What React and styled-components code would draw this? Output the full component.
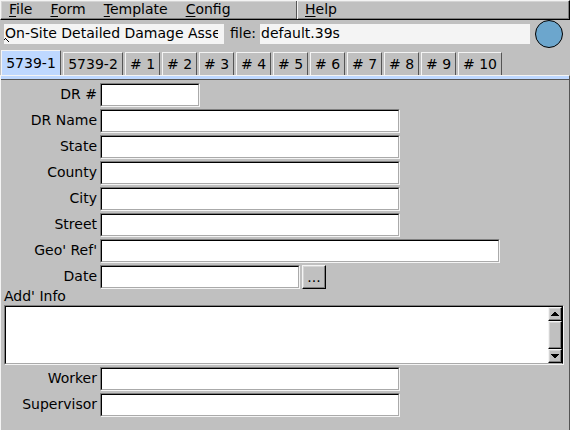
import React from "react";
import styled, { createGlobalStyle } from "styled-components";

const GlobalStyle = createGlobalStyle`
  * { box-sizing: border-box; }
  html, body { margin: 0; background: #c0c0c0; }
  body, button, input, textarea {
    font-family: "DejaVu Sans", sans-serif;
    font-size: 14px;
    color: #000;
  }
  button, input, textarea { margin: 0; padding: 0; border: 0; border-radius: 0; outline: none; }
`;

const Window = styled.div`
  display: flex;
  flex-direction: column;
  min-height: 100vh;
`;

const MenuBar = styled.nav`
  display: flex;
  height: 20px;
  border: 1px solid;
  border-color: #f4f4f4 #000 #000 #f4f4f4;
  box-shadow: inset -1px -1px #808080, inset 1px 1px #d4d4d4;
`;

const MenuGroup = styled.div`
  display: flex;
  gap: 2px;
  width: ${(p) => (p.$main ? "296px" : "auto")};
  border-right: ${(p) => (p.$main ? "1px solid #555" : "0")};
  box-shadow: ${(p) => (p.$main ? "1px 0 #f4f4f4" : "none")};
`;

const MenuItem = styled.button`
  padding: 0 8px;
  height: 16px;
  line-height: 14px;
  background: transparent;
  white-space: nowrap;
  u { text-underline-offset: 2px; text-decoration-thickness: 1px; }
`;

const TitleRow = styled.header`
  display: flex;
  align-items: center;
  height: 30px;
  padding: 0 6px 2px 4px;
`;

const TitleField = styled.div`
  display: flex;
  position: relative;
  width: 220px;
`;

const FlatInput = styled.input`
  width: 100%;
  min-width: 0;
  height: 20px;
  padding: 0 6px 2px 1px;
  background: #f4f4f4;
`;

const Caret = styled.svg`
  position: absolute;
  left: 0;
  bottom: 2px;
`;

const FileField = styled.label`
  display: flex;
  align-items: baseline;
  flex: 1;
  gap: 4px;
  margin: 0 5px 0 6px;
`;

const Tabs = styled.div`
  display: flex;
  align-items: flex-end;
  gap: 2px;
  height: 25px;
  padding-left: 1px;
`;

const Tab = styled.button`
  width: ${(p) => p.$width}px;
  height: ${(p) => (p.$active ? 25 : 23)}px;
  padding-bottom: ${(p) => (p.$active ? 1 : 0)}px;
  border: 1px solid;
  border-width: 1px 1px 0;
  border-color: #f4f4f4 #555 #f4f4f4 #f4f4f4;
  background: ${(p) => (p.$active ? "#bed8ff" : "#c0c0c0")};
  white-space: nowrap;
`;

const Panel = styled.main`
  flex: 1;
  border: 1px solid;
  border-width: 1px 1px 0;
  border-color: #f4f4f4 #555 #f4f4f4 #f4f4f4;
`;

const SelectionBar = styled.div`
  height: 4px;
  background: #bed8ff;
  border-bottom: 1px solid #555;
`;

const Form = styled.form`
  display: flex;
  flex-direction: column;
  gap: 2px;
  padding: 3px 5px 12px 3px;
`;

const Row = styled.div`
  display: grid;
  grid-template-columns: 93px minmax(0, 1fr);
  column-gap: 3px;
  height: 24px;
`;

const Label = styled.label`
  text-align: right;
  line-height: 22px;
  white-space: nowrap;
`;

const Controls = styled.div`
  display: flex;
  gap: 2px;
`;

const Sunken = styled.div`
  display: flex;
  width: ${(p) => p.$width};
  max-width: 100%;
  height: ${(p) => p.$height}px;
  border: 1px solid;
  border-color: #808080 #f4f4f4 #f4f4f4 #808080;
`;

const TextInput = styled.input`
  flex: 1;
  min-width: 0;
  padding: 0 2px;
  background: #fff;
  border: 1px solid;
  border-color: #000 #aaa #aaa #000;
`;

const RaisedButton = styled.button`
  display: flex;
  align-items: center;
  justify-content: center;
  flex: ${(p) => (p.$grow ? "1" : "none")};
  width: ${(p) => p.$size}px;
  height: ${(p) => p.$size}px;
  line-height: 20px;
  background: #c0c0c0;
  border: 1px solid;
  border-color: #f4f4f4 #000 #000 #f4f4f4;
  box-shadow: inset -1px -1px #808080, inset 1px 1px #d4d4d4;
`;

const InfoBlock = styled.div`
  display: flex;
  flex-direction: column;
  margin-top: -2px;
`;

const InfoLabel = styled.label`
  height: 16px;
  line-height: 14px;
`;

const NotesBody = styled.div`
  display: flex;
  flex: 1;
  border: 1px solid;
  border-color: #000 #000 #aaa #000;
`;

const Notes = styled.textarea`
  flex: 1;
  padding: 2px;
  resize: none;
  overflow: hidden;
  background: #fff;
`;

const ScrollBar = styled.div`
  display: flex;
  flex-direction: column;
  width: 14px;
`;

function Arrow({ down }) {
  return (
    <svg width="8" height="4" viewBox="0 0 8 4" shapeRendering="crispEdges" aria-hidden="true">
      <path d={down ? "M0 0h8v1H7v1H6v1H5v1H3V3H2V2H1V1H0z" : "M3 0h2v1h1v1h1v1h1v1H0V3h1V2h1V1h1z"} />
    </svg>
  );
}

function Field({ id, label, width, children }) {
  return (
    <Row>
      <Label htmlFor={id}>{label}</Label>
      <Controls>
        <Sunken $width={`${width}px`} $height={24}>
          <TextInput id={id} type="text" />
        </Sunken>
        {children}
      </Controls>
    </Row>
  );
}

const menus = ["File", "Form", "Template", "Config"];

const tabs = [
  { name: "5739-1", width: 60 },
  { name: "5739-2", width: 60 },
  ...Array.from({ length: 10 }, (_, i) => ({ name: `# ${i + 1}`, width: i === 9 ? 44 : 35 })),
];

const places = [
  { id: "dr-number", label: "DR #", width: 100 },
  { id: "dr-name", label: "DR Name", width: 300 },
  { id: "state", label: "State", width: 300 },
  { id: "county", label: "County", width: 300 },
  { id: "city", label: "City", width: 300 },
  { id: "street", label: "Street", width: 300 },
  { id: "geo-ref", label: "Geo' Ref'", width: 400 },
];

function Menu({ name }) {
  return (
    <MenuItem type="button">
      <u>{name[0]}</u>
      {name.slice(1)}
    </MenuItem>
  );
}

export default function App() {
  const [active, setActive] = React.useState(0);
  return (
    <Window>
      <GlobalStyle />
      <MenuBar>
        <MenuGroup $main>
          {menus.map((name) => (
            <Menu key={name} name={name} />
          ))}
        </MenuGroup>
        <MenuGroup>
          <Menu name="Help" />
        </MenuGroup>
      </MenuBar>
      <TitleRow>
        <TitleField>
          <FlatInput readOnly aria-label="Form title" value="On-Site Detailed Damage Assessment" />
          <Caret width="5" height="5" viewBox="0 0 5 5" shapeRendering="crispEdges" aria-hidden="true">
            <path d="M0 2h1v1H0zM1 1h1v1H1zM2 2h1v1H2zM3 3h1v1H3zM4 4h1v1H4z" />
          </Caret>
        </TitleField>
        <FileField>
          file:
          <FlatInput readOnly value="default.39s" />
        </FileField>
        <svg width="29" height="28" viewBox="0 0 29 28" aria-hidden="true">
          <circle cx="14" cy="14" r="13.5" fill="#6ca6cd" stroke="#000" />
        </svg>
      </TitleRow>
      <Tabs role="tablist">
        {tabs.map((tab, i) => (
          <Tab
            key={tab.name}
            type="button"
            role="tab"
            aria-selected={i === active}
            $active={i === active}
            $width={tab.width}
            onClick={() => setActive(i)}
          >
            {tab.name}
          </Tab>
        ))}
      </Tabs>
      <Panel>
        <SelectionBar />
        <Form>
          {places.map((field) => (
            <Field key={field.id} {...field} />
          ))}
          <Field id="date" label="Date" width={200}>
            <RaisedButton type="button" $size={24} aria-label="Pick date">
              ...
            </RaisedButton>
          </Field>
          <InfoBlock>
            <InfoLabel htmlFor="info">Add' Info</InfoLabel>
            <Sunken $width="100%" $height={60}>
              <NotesBody>
                <Notes id="info" />
                <ScrollBar>
                  <RaisedButton type="button" $size={14} aria-label="Scroll up">
                    <Arrow />
                  </RaisedButton>
                  <RaisedButton type="button" $size={14} $grow aria-label="Scroll position" />
                  <RaisedButton type="button" $size={14} aria-label="Scroll down">
                    <Arrow down />
                  </RaisedButton>
                </ScrollBar>
              </NotesBody>
            </Sunken>
          </InfoBlock>
          <Field id="worker" label="Worker" width={300} />
          <Field id="supervisor" label="Supervisor" width={300} />
        </Form>
      </Panel>
    </Window>
  );
}
